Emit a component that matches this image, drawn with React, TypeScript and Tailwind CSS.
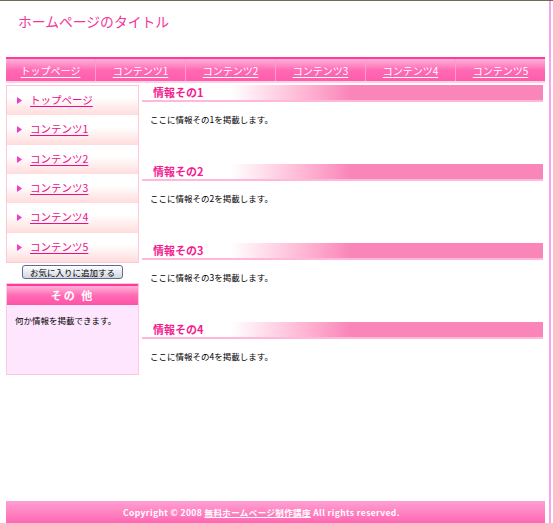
const navItems = ['トップページ', 'コンテンツ1', 'コンテンツ2', 'コンテンツ3', 'コンテンツ4', 'コンテンツ5'];
const sections = ['1', '2', '3', '4'];

const jp = { fontFamily: '"Noto Sans CJK JP", "Noto Sans", sans-serif' };

export default function App() {
  return (
    <div className="w-[553px] h-[523px] bg-white border-t border-[#6e6e52] overflow-hidden" style={jp}>
      <div className="w-[551px] h-full border-r-2 border-[#f8a2f2] pl-[6px] pr-[4px] flex flex-col">
        {/* ヘッダー */}
        <div className="h-[56px] pt-[10px] pl-[12px]">
          <h1 className="text-[13.8px] leading-[20px] text-[#f2369a] font-normal">ホームページのタイトル</h1>
        </div>

        {/* ナビ */}
        <div className="w-[539px] h-[26px] border-b-[2px] border-[#ffd0e6]">
          <div className="flex h-[24px] border-t-2 border-[#ff3a9c] bg-gradient-to-b from-[#ffb0d8] via-[#ff6ab5] to-[#ff5cab]">
            {navItems.map((n, i) => (
              <a
                key={n}
                className={`flex-1 flex items-center justify-center text-[10px] text-white underline underline-offset-2 ${i > 0 ? 'border-l border-[#ff9ccd]' : ''}`}
              >
                {n}
              </a>
            ))}
          </div>
        </div>

        <div className="flex gap-[3px] mt-[2px] w-[539px]">
          {/* サイドバー */}
          <div className="w-[133px] shrink-0 flex flex-col">
            <ul className="border border-[#ffc8d8]">
              {navItems.map((n) => (
                <li
                  key={n}
                  className="h-[29.33px] flex items-start pt-[7px] pl-[10px] gap-[8px] bg-gradient-to-b from-white from-40% to-[#ffdcdc]"
                >
                  <svg width="5" height="7" viewBox="0 0 5 7" className="mt-[4px]">
                    <polygon points="0,0 5,3.5 0,7" fill="#f03cc8" />
                  </svg>
                  <a className="text-[10.5px] leading-[14px] text-[#e8108a] underline underline-offset-2">{n}</a>
                </li>
              ))}
            </ul>
            <div className="flex justify-center mt-[2px]">
              <button className="w-[101px] h-[14px] rounded-[3px] border border-[#5b6d8c] bg-gradient-to-b from-white to-[#d2d6e2] text-[8.5px] leading-[12px] text-black">
                お気に入りに追加する
              </button>
            </div>
            <div className="mt-[4px] border border-[#ffc8e0]">
              <div className="h-[21px] border-t-2 border-[#ff3a9c] bg-gradient-to-b from-[#ffb0d8] via-[#ff6ab5] to-[#ff52a6] flex items-center justify-center text-white text-[11px] font-bold tracking-[2px]">
                その 他
              </div>
              <div className="h-[69px] bg-[#ffe6ff] pt-[9px] pl-[8px] text-[8.5px] text-black">
                何か情報を掲載できます。
              </div>
            </div>
          </div>

          {/* メイン */}
          <div className="flex-1 pr-[2px] flex flex-col gap-[39px]">
            {sections.map((s) => (
              <div key={s}>
                <h2 className="h-[17px] border-b-2 border-[#ffb8da] bg-gradient-to-r from-white from-22% to-[#f985b9] to-52% pl-[11px] text-[11px] leading-[15px] font-bold text-[#f51c90]">
                  情報その{s}
                </h2>
                <p className="mt-[11px] pl-[8px] text-[8.5px] leading-[12px] text-black">
                  ここに情報その{s}を掲載します。
                </p>
              </div>
            ))}
          </div>
        </div>

        {/* フッター */}
        <div className="mt-auto w-[539px] h-[22px] pr-[28px] bg-gradient-to-b from-[#ff9fd2] to-[#ff66b3] flex items-center justify-center text-white text-[8.5px] font-bold tracking-[0.4px]">
          Copyright © 2008&nbsp;<a className="underline">無料ホームページ制作講座</a>&nbsp;All rights reserved.
        </div>
      </div>
    </div>
  );
}
